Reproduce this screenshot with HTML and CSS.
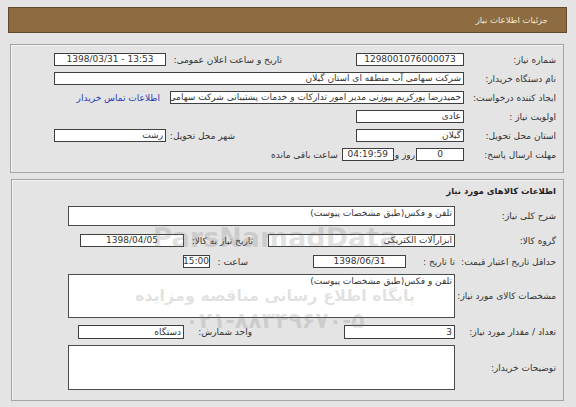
FILE: index.html
```html
<!DOCTYPE html>
<html lang="fa" dir="rtl">
<head>
<meta charset="utf-8">
<title>جزئیات اطلاعات نیاز</title>
<link rel="stylesheet" href="styles.css">
</head>
<body>
<div class="page">
  <div class="header">جزئیات اطلاعات نیاز</div>

  <div class="box box1">
    <div class="row">
      <span class="lbl l1">شماره نیاز:</span>
      <span class="inp c w108">1298001076000073</span>
      <span class="lbl2 m74 w116">تاریخ و ساعت اعلان عمومی:</span>
      <span class="inp c w112" dir="ltr">1398/03/31 - 13:53</span>
    </div>
    <div class="row">
      <span class="lbl l1">نام دستگاه خریدار:</span>
      <span class="inp w410">شرکت سهامی آب منطقه ای استان گیلان</span>
    </div>
    <div class="row">
      <span class="lbl l1">ایجاد کننده درخواست:</span>
      <span class="inp w294">حمیدرضا پورکریم پیوزنی مدیر امور تدارکات و خدمات پشتیبانی شرکت سهامی</span>
      <a class="link" href="#">اطلاعات تماس خریدار</a>
    </div>
    <div class="row">
      <span class="lbl l1">اولویت نیاز :</span>
      <span class="inp w108">عادی</span>
    </div>
    <div class="row">
      <span class="lbl l1">استان محل تحویل:</span>
      <span class="inp w108">گیلان</span>
      <span class="lbl2 m121 w69">شهر محل تحویل:</span>
      <span class="inp w112">رشت</span>
    </div>
    <div class="row">
      <span class="lbl l1">مهلت ارسال پاسخ:</span>
      <span class="inp c w48">0</span>
      <span class="txt day">روز و</span>
      <span class="inp c w52">04:19:59</span>
      <span class="txt m4">ساعت باقی مانده</span>
    </div>
  </div>

  <div class="box box2">
    <div class="title">اطلاعات کالاهای مورد نیاز</div>
    <div class="row tall t1">
      <span class="lbl l2">شرح کلی نیاز:</span>
      <span class="area h20">تلفن و فکس(طبق مشخصات پیوست)</span>
    </div>
    <div class="row r2">
      <span class="lbl l2">گروه کالا:</span>
      <span class="inp w187">ابزارآلات الکتریکی</span>
      <span class="lbl2 m15 w69">تاریخ نیاز به کالا:</span>
      <span class="inp c w104">1398/04/05</span>
    </div>
    <div class="row r3">
      <span class="lbl l2">حداقل تاریخ اعتبار قیمت:</span>
      <span class="txt w49">تا تاریخ :</span>
      <span class="inp c w93">1398/06/31</span>
      <span class="txt m65 w38">ساعت :</span>
      <span class="inp c w27 tight">15:00</span>
    </div>
    <div class="row tall t2">
      <span class="lbl l2">مشخصات کالای مورد نیاز:</span>
      <span class="area h44">تلفن و فکس(طبق مشخصات پیوست)</span>
    </div>
    <div class="row r4">
      <span class="lbl l2">تعداد / مقدار مورد نیاز:</span>
      <span class="inp w111 hi">3</span>
      <span class="lbl2 m92 w68">واحد شمارش:</span>
      <span class="inp w106 hi">دستگاه</span>
    </div>
    <div class="row tall t3">
      <span class="lbl l2">توضیحات خریدار:</span>
      <span class="area h45"></span>
    </div>
  </div>

  <div class="watermark" aria-hidden="true">
    <div class="wm1">ParsNamadData</div>
    <div class="wm2">پایگاه اطلاع رسانی مناقصه ومزایده</div>
    <div class="wm3">۰۲۱-۸۸۳۴۹۶۷۰-۵</div>
  </div>
</div>
</body>
</html>
```
FILE: styles.css
```css
html, body {
  margin: 0;
  padding: 0;
  background: #e4e4e4;
}
body {
  font-family: "DejaVu Sans", Tahoma, sans-serif;
  font-size: 9px;
  color: #333;
  width: 576px;
  height: 407px;
  overflow: hidden;
}
.page {
  position: relative;
  padding: 7px 9px 0 8px;
}
.header {
  height: 24px;
  line-height: 24px;
  background: #8d6c41;
  border: 1px solid #5d4a31;
  color: #f3ead6;
  font-size: 8.5px;
  padding-right: 18px;
}
.box {
  margin: 11px 3px 0 2px;
  border: 1px solid #a3a3a3;
  box-shadow: inset 1px 1px 0 #f4f4f4;
  padding: 8px 7px 10px 8px;
}
.box1 {
  display: flex;
  flex-direction: column;
  gap: 6px;
  padding-bottom: 11px;
}
.box2 {
  margin-top: 6px;
  margin-left: 3px;
  padding-top: 5px;
}
.row {
  display: flex;
  align-items: center;
  height: 13px;
  white-space: nowrap;
}
.lbl {
  flex: none;
  text-align: right;
}
.l1 { width: 92px; }
.l2 { width: 101px; }
.lbl2, .txt {
  flex: none;
  text-align: right;
}
.inp, .area {
  flex: none;
  box-sizing: border-box;
  height: 13px;
  line-height: 11px;
  background: #fff;
  border: 1px solid #3f3f3f;
  padding: 0 2px;
  overflow: hidden;
  white-space: nowrap;
  text-align: right;
  color: #333;
}
.inp.c { text-align: center; }
.inp.tight { padding: 0; }
.inp.hi { height: 14px; line-height: 12px; }
.area {
  width: 387px;
  white-space: normal;
  line-height: 13px;
  border-color: #4a4a4a;
}
.tall { height: auto; }
.h20 { height: 20px; }
.h44 { height: 44px; }
.h45 { height: 45px; }
.day {
  padding: 0 1px 0 1px;
}
.link {
  color: #2b3bb5;
  text-decoration: none;
  margin-right: 10px;
}
.title {
  font-weight: bold;
  font-size: 8.5px;
  height: 12px;
  line-height: 12px;
  color: #222;
}
.t1 { margin-top: 9px; }
.r2 { margin-top: 8px; }
.r3 { margin-top: 8px; }
.t2 { margin-top: 6px; }
.r4 { margin-top: 7px; height: 14px; }
.t3 { margin-top: 6px; }

.w27 { width: 27px; }
.w38 { width: 38px; }
.w48 { width: 48px; }
.w49 { width: 49px; }
.w52 { width: 52px; }
.w68 { width: 68px; }
.w69 { width: 69px; }
.w93 { width: 93px; }
.w104 { width: 104px; }
.w106 { width: 106px; }
.w108 { width: 108px; }
.w111 { width: 111px; }
.w112 { width: 112px; }
.w116 { width: 116px; }
.w187 { width: 187px; }
.w294 { width: 294px; }
.w410 { width: 410px; }
.m4 { margin-right: 4px; }
.m15 { margin-right: 15px; }
.m65 { margin-right: 65px; }
.m74 { margin-right: 74px; }
.m92 { margin-right: 92px; }
.m121 { margin-right: 121px; }

.watermark {
  position: absolute;
  left: 120px;
  top: 222px;
  width: 310px;
  pointer-events: none;
  text-align: center;
  white-space: nowrap;
  color: rgba(120, 120, 120, 0.22);
  font-family: "DejaVu Sans", sans-serif;
  font-weight: bold;
}
.wm1 {
  font-size: 27px;
  line-height: 32px;
  direction: ltr;
}
.wm2 {
  font-size: 16px;
  line-height: 24px;
  margin-top: 30px;
}
.wm3 {
  font-size: 22px;
  line-height: 26px;
  direction: ltr;
}
```
